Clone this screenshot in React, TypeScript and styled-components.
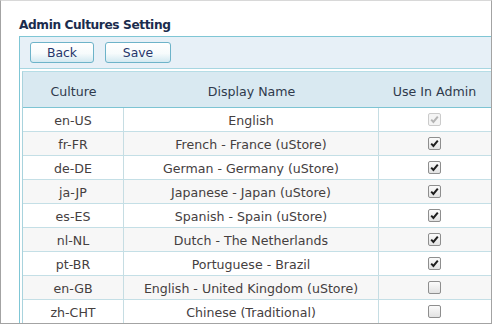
import styled, { createGlobalStyle } from 'styled-components';

type Culture = {
  code: string;
  name: string;
  state: 'on' | 'off' | 'locked';
};

const cultures: Culture[] = [
  { code: 'en-US', name: 'English', state: 'locked' },
  { code: 'fr-FR', name: 'French - France (uStore)', state: 'on' },
  { code: 'de-DE', name: 'German - Germany (uStore)', state: 'on' },
  { code: 'ja-JP', name: 'Japanese - Japan (uStore)', state: 'on' },
  { code: 'es-ES', name: 'Spanish - Spain (uStore)', state: 'on' },
  { code: 'nl-NL', name: 'Dutch - The Netherlands', state: 'on' },
  { code: 'pt-BR', name: 'Portuguese - Brazil', state: 'on' },
  { code: 'en-GB', name: 'English - United Kingdom (uStore)', state: 'off' },
  { code: 'zh-CHT', name: 'Chinese (Traditional)', state: 'off' },
];

const GlobalStyle = createGlobalStyle`
  html, body {
    margin: 0;
    padding: 0;
    background: #fff;
    overflow: hidden;
  }
  * {
    box-sizing: border-box;
  }
`;

const CheckBox = ({ state }: { state: Culture['state'] }) => (
  <Box $state={state}>
    {state !== 'off' && (
      <svg width="11" height="11" viewBox="0 0 11 11">
        <path
          d="M2.2 5.6 L4.4 7.9 L8.8 2.6"
          fill="none"
          stroke={state === 'locked' ? '#b4b4b4' : '#1e1e1e'}
          strokeWidth="2"
        />
      </svg>
    )}
  </Box>
);

const App = () => {
  return (
    <>
      <GlobalStyle />
      <Frame>
        <Title>Admin Cultures Setting</Title>
        <Panel>
          <Toolbar>
            <Button>Back</Button>
            <Button $wide>Save</Button>
          </Toolbar>
          <Grid>
            <HeadRow>
              <HeadCell>Culture</HeadCell>
              <HeadCell>Display Name</HeadCell>
              <HeadCell $last>Use In Admin</HeadCell>
            </HeadRow>
            {cultures.map((c, index) => (
              <Row key={c.code} $alt={index % 2 === 1}>
                <Cell>{c.code}</Cell>
                <Cell>{c.name}</Cell>
                <Cell $last>
                  <CheckBox state={c.state} />
                </Cell>
              </Row>
            ))}
          </Grid>
        </Panel>
      </Frame>
    </>
  );
};

const Frame = styled.div`
  width: 492px;
  height: 324px;
  border: 1px solid #a3a3a3;
  border-top-color: #d8d8d8;
  padding: 16px 0 0 18px;
  overflow: hidden;
  font-family: 'DejaVu Sans', Verdana, sans-serif;
  background: #fff;
`;

const Title = styled.div`
  font-size: 12.2px;
  font-weight: bold;
  letter-spacing: -0.4px;
  line-height: 16px;
  color: #1b2c4d;
  margin-bottom: 3px;
`;

const Panel = styled.div`
  width: 490px;
  border: 1px solid #7fc6d5;
  border-bottom: none;
  padding-left: 2px;
`;

const Toolbar = styled.div`
  display: flex;
  gap: 11px;
  height: 32px;
  margin-left: -2px;
  padding: 5px 0 0 10px;
  background: #e7f0f7;
  border-bottom: 1px solid #a7d6e1;
  margin-bottom: 2px;
`;

const Button = styled.div<{ $wide?: boolean }>`
  width: ${(p) => (p.$wide ? 66 : 64)}px;
  height: 21px;
  border: 1px solid #6db3c9;
  border-radius: 3px;
  background: linear-gradient(#ffffff 0%, #f7fbfc 55%, #d3e9f1 100%);
  color: #26366b;
  font-size: 12.4px;
  line-height: 19px;
  text-align: center;
`;

const Grid = styled.div`
  border-top: 1px solid #b6dde6;
  border-left: 1px solid #a9d3dd;
  width: 480px;
`;

const HeadRow = styled.div`
  display: grid;
  grid-template-columns: 101px 255px 1fr;
  height: 36px;
  background: #d9e9f1;
  border-bottom: 1px solid #7dc4d3;
`;

const HeadCell = styled.div<{ $last?: boolean }>`
  display: flex;
  align-items: center;
  justify-content: center;
  padding: 3px ${(p) => (p.$last ? 12 : 0)}px 0 0;
  font-size: 12.6px;
  color: #2f3a4c;
`;

const Row = styled.div<{ $alt: boolean }>`
  display: grid;
  grid-template-columns: 101px 255px 1fr;
  height: 24px;
  background: ${(p) => (p.$alt ? '#f7f7f7' : '#ffffff')};
  border-bottom: 1px solid #c4dfe6;
`;

const Cell = styled.div<{ $last?: boolean }>`
  display: flex;
  align-items: center;
  justify-content: center;
  padding: ${(p) => (p.$last ? '0 12px 0 0' : '2px 0 0 0')};
  border-right: ${(p) => (p.$last ? 'none' : '1px solid #c6dde3')};
  font-size: 12.6px;
  color: #45403f;
  white-space: nowrap;
`;

const Box = styled.span<{ $state: Culture['state'] }>`
  display: flex;
  align-items: center;
  justify-content: center;
  width: 13px;
  height: 13px;
  border: 1px solid ${(p) => (p.$state === 'locked' ? '#cbcbcb' : '#8e8e8e')};
  border-radius: 2px;
  background: ${(p) =>
    p.$state === 'locked'
      ? '#f4f4f4'
      : 'linear-gradient(#fbfbfb, #e2e2e2)'};
`;

export default App;
